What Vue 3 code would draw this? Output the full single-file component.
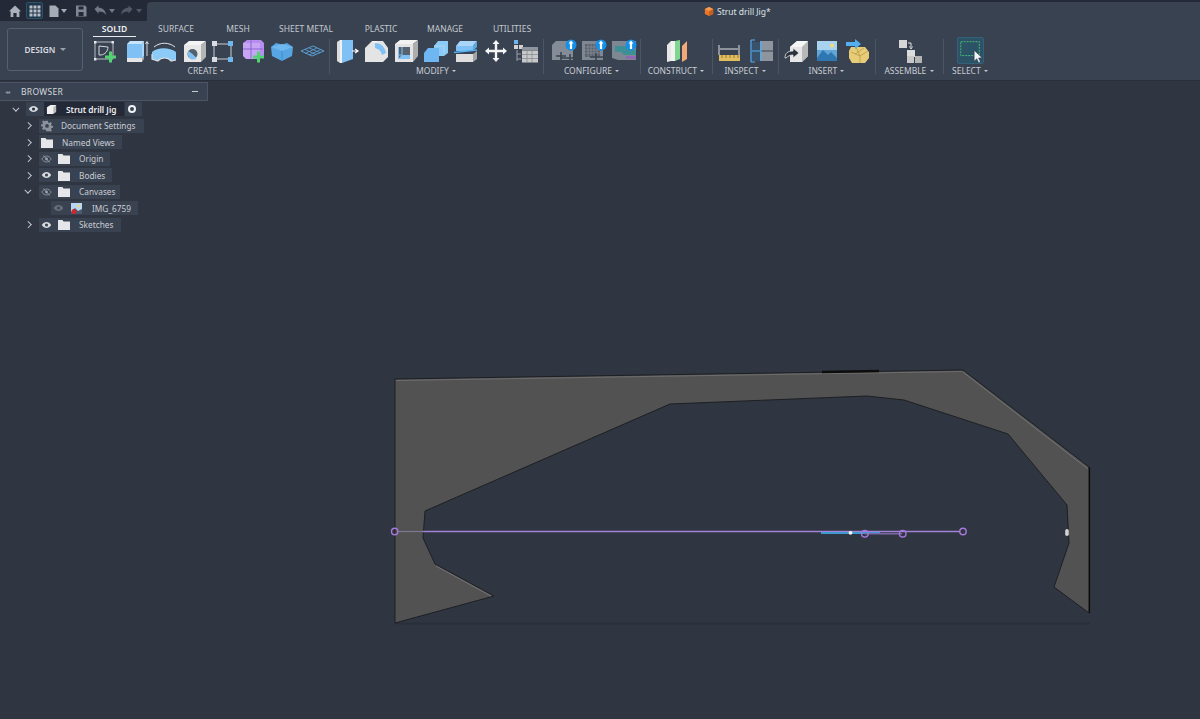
<script setup>
const tabs = [
  { name: 'SOLID', width: 43, active: true },
  { name: 'SURFACE', width: 80 },
  { name: 'MESH', width: 44 },
  { name: 'SHEET METAL', width: 92 },
  { name: 'PLASTIC', width: 58 },
  { name: 'MANAGE', width: 70 },
  { name: 'UTILITIES', width: 64 }
];

const rows = [
  { name: 'Document Settings', chevron: 'right', kind: 'gear', width: 105 },
  { name: 'Named Views', chevron: 'right', kind: 'folder', width: 83 },
  { name: 'Origin', chevron: 'right', kind: 'hidden', width: 71 },
  { name: 'Bodies', chevron: 'right', kind: 'shown', width: 73 },
  { name: 'Canvases', chevron: 'down', kind: 'hidden', width: 81 },
  { name: 'IMG_6759', chevron: '', kind: 'image', width: 87 },
  { name: 'Sketches', chevron: 'right', kind: 'shown', width: 82 }
];
</script>

<template>
  <div class="app">
    <!-- model on the free canvas -->
    <svg class="viewport" viewBox="0 0 1200 719">
      <line x1="395" y1="623.5" x2="1090" y2="623.5" stroke="#292e38" stroke-width="1.5" />
      <polygon
        points="395,379 963,370 1089,467 1089,613 1054,587 1069,543 1067,505 1008,434 904,400 867,396 670,404 425,511 423,538 435,564 494,596 395,623"
        fill="#525252" stroke="#1d1f23" stroke-width="1" />
      <line x1="396" y1="380.5" x2="962" y2="371.5" stroke="#6d6d6d" stroke-width="1" />
      <line x1="963" y1="372" x2="1088" y2="469" stroke="#727272" stroke-width="1" />
      <line x1="436" y1="566" x2="491" y2="596" stroke="#727272" stroke-width="1" />
      <line x1="822" y1="372" x2="879" y2="371" stroke="#0d0d0d" stroke-width="2.4" />
      <line x1="1089.500" y1="467" x2="1089.500" y2="613" stroke="#0b0b0b" stroke-width="1.2" />
      <line x1="398" y1="531.5" x2="423" y2="531.5" stroke="#7f7a92" stroke-width="1.2" />
      <line x1="423" y1="531.5" x2="960" y2="531.5" stroke="#a184d6" stroke-width="1.5" />
      <line x1="821" y1="533" x2="880" y2="533" stroke="#3f9ad2" stroke-width="2" />
      <line x1="865" y1="533.7" x2="902" y2="533.7" stroke="#7f66a8" stroke-width="1.6" />
      <g fill="none" stroke="#a877dc" stroke-width="1.4">
        <circle cx="394.7" cy="531.5" r="3.2" />
        <circle cx="963" cy="531.5" r="3.2" />
        <circle cx="864.8" cy="533.7" r="3.3" />
        <circle cx="902.7" cy="533.7" r="3.3" />
      </g>
      <circle cx="850.5" cy="532.8" r="1.9" fill="#f4f4f4" />
      <rect x="1065.2" y="529" width="3.6" height="7" rx="1.8" fill="#d2d2d2" />
    </svg>

    <header class="titlebar">
      <div class="quick">
        <svg class="qi" viewBox="0 0 14 14"><path d="M7 1.500 13 7.200h-1.600V13H8.600V9H5.400v4H2.600V7.200H1z" fill="#aab0ba" /></svg>
        <span class="grid-btn">
          <svg class="qi" viewBox="0 0 14 14"><path d="M1.500 1.500h3v3h-3zM5.500 1.500h3v3h-3zM9.500 1.500h3v3h-3zM1.500 5.500h3v3h-3zM5.500 5.500h3v3h-3zM9.500 5.500h3v3h-3zM1.500 9.500h3v3h-3zM5.500 9.500h3v3h-3zM9.500 9.500h3v3h-3z" fill="#b9bec7" /></svg>
        </span>
        <svg class="qi file" viewBox="0 0 14 14"><path d="M2.500 1.500h6l3 3v8.500h-9z" fill="#a6acb6" /></svg>
        <i class="caret"></i>
        <svg class="qi save" viewBox="0 0 14 14"><path fill-rule="evenodd" d="M2 1.500h9l1.500 1.500v9.500h-10.500zM4.500 2.500v3h5v-3zM4.500 8v4h5v-4z" fill="#7f8793" /></svg>
        <svg class="qi undo" viewBox="0 0 14 14"><path d="M1.500 5 5.500 1.500v2.300c4 0 7 2.200 7.500 7.200-1.500-2.700-3.500-3.600-7.500-3.600v2.300z" fill="#727985" /></svg>
        <i class="caret dim"></i>
        <svg class="qi redo" viewBox="0 0 14 14"><path d="M12.500 5 8.500 1.500v2.300c-4 0-7 2.200-7.500 7.200 1.500-2.700 3.500-3.600 7.500-3.600v2.300z" fill="#515966" /></svg>
        <i class="caret dimmer"></i>
      </div>
      <div class="doc">
        <svg class="doc-ico" viewBox="0 0 12 12"><path d="M6 .5 11 3v6l-5 2.500L1 9V3z" fill="#e9772b" /><path d="M6 5.500 11 3v6l-5 2.500z" fill="#c95f1c" /><path d="M6 .5 11 3 6 5.500 1 3z" fill="#f59a4e" /></svg>
        <span>Strut drill Jig*</span>
      </div>
    </header>

    <section class="toolbar">
      <button class="design">DESIGN <i class="caret light"></i></button>
      <div class="ribbon">
        <nav class="tabs">
          <span v-for="tab in tabs" :key="tab.name" class="tab" :class="{ active: tab.active }" :style="{ width: tab.width + 'px' }">{{ tab.name }}</span>
        </nav>
        <div class="groups">
          <div class="group create" style="width: 239px">
            <div class="icons tight">
              <svg class="ico" viewBox="0 0 30 26">
                <path d="M5 4h18v17H5z" fill="none" stroke="#c8ccd3" stroke-width=".9" />
                <path d="M4 3h2.400v2.400H4zM21.500 3h2.400v2.400h-2.400zM4 20h2.400v2.400H4z" fill="#e6e8eb" />
                <path d="M9 8v9h2c4-.5 7-4 7-8z" fill="none" stroke="#d5d8dd" />
                <path d="M19 13.500h3v4h4v3h-4v4h-3v-4h-4v-3h4z" fill="#52d273" />
              </svg>
              <svg class="ico" viewBox="0 0 30 26">
                <path d="M7 6 10 3h14l-2 3z" fill="#c8e4fb" />
                <path d="M7 6h15v15H7z" fill="#7fc1f4" />
                <path d="M22 6l2-3v15l-2 3z" fill="#a9d6f8" />
                <path d="M7 20h15v4H7z" fill="#e6e6e6" />
                <path d="M22 20l2-2v3l-2 3z" fill="#a8a8a8" />
                <path d="M27 18V4M25.500 6 27 3.500 28.500 6" fill="none" stroke="#e6e8eb" stroke-width=".9" />
              </svg>
              <svg class="ico" viewBox="0 0 30 26">
                <path d="M5 9c6-5 15-5 21 0" fill="none" stroke="#e4e6ea" />
                <path d="M3 14c6-5 17-5 24 0v8l-5 1c-3-4-10-4-13 0l-6-2z" fill="#8ccbf7" />
                <path d="M3 16v5l6 2c3-4 10-4 13 0l5-1" fill="none" stroke="#e0e0e0" stroke-width="1.200" />
              </svg>
              <svg class="ico" viewBox="0 0 30 26">
                <path d="M5 7h17v17H5z" fill="#e7e7e7" />
                <path d="M5 7l5-4h17l-5 4z" fill="#f4f4f4" />
                <path d="M22 7l5-4v16l-5 5z" fill="#b5b5b5" />
                <circle cx="13.500" cy="16" r="5" fill="#53616f" />
                <path d="M13.500 16l-4-3c-1 2-1 5 1 7s5 2 7 0z" fill="#7fc1f4" />
              </svg>
              <svg class="ico" viewBox="0 0 30 26">
                <path d="M8 6h12M8 21h12M6 8v11M23 8v11" stroke="#c9cdd3" stroke-width="1" />
                <path d="M4 3h5v5H4zM4 19h5v5H4z" fill="#d9dce1" />
                <path d="M20 3h5v5h-5zM20 19h5v5h-5z" fill="#6db7f0" />
              </svg>
              <svg class="ico" viewBox="0 0 30 26">
                <path d="M5 5 9 2h14l3 3v15H8l-3-3z" fill="#b78df0" />
                <path d="M5 5h17v16H8l-3-3z" fill="#c6a5f4" />
                <path d="M13 2.500v18M5 11h20" stroke="#8a5fd0" stroke-width=".9" fill="none" />
                <path d="M19 13.500h3v4h4v3h-4v4h-3v-4h-4v-3h4z" fill="#52d273" />
              </svg>
              <svg class="ico" viewBox="0 0 30 26">
                <path d="M4 9 9 5l6 1.500L20 5l6 4-1 9-10 5-10-5z" fill="#57a5e2" />
                <path d="M4 9 15 13l11-4-11-3z" fill="#6eb7ef" />
                <path d="M15 13v10" stroke="#3b85c4" stroke-width=".8" />
              </svg>
              <svg class="ico" viewBox="0 0 30 26">
                <path d="M4 13 16 8l11 5-12 5z" fill="none" stroke="#5ea6dc" stroke-width=".9" />
                <path d="M8 11.500l11 5M12 9.800l11 5M8 15.500 20 10M12 17 24 11.500" stroke="#5ea6dc" stroke-width=".8" />
              </svg>
            </div>
            <span class="glabel">CREATE <i class="caret small"></i></span>
          </div>
          <div class="group" style="width: 214px">
            <div class="icons">
              <svg class="ico" viewBox="0 0 30 26">
                <path d="M6 4l3-2v23l-3-2z" fill="#dcdcdc" />
                <path d="M11 2h11v19l-11 4z" fill="#7fc1f4" />
                <path d="M9 2h2v23H9z" fill="#f0f0f0" />
                <path d="M21 13h5M24 11l3 2-3 2" fill="none" stroke="#fff" stroke-width="1.200" />
              </svg>
              <svg class="ico" viewBox="0 0 30 26">
                <path d="M4 10 11 3h11l5 7v9l-5 5H4z" fill="#e4e4e4" />
                <path d="M14 5c6 0 10 4 11 10l-4 2c-1-4-3-6-7-7z" fill="#7fc1f4" />
                <path d="M11 3h7l-4 2z" fill="#f4f4f4" />
              </svg>
              <svg class="ico" viewBox="0 0 30 26">
                <path d="M4 6h18v18H4z" fill="#e4e4e4" />
                <path d="M4 6l5-4h18l-5 4z" fill="#f2f2f2" />
                <path d="M22 6l5-4v16l-5 6z" fill="#adadad" />
                <path d="M7 9h12v12H7z" fill="#56636f" />
                <path d="M7 21l4-4h8v4zM7 9h1v12H7z" fill="#7fc1f4" />
                <path d="M11 9v8H7" stroke="#7fc1f4" fill="none" />
              </svg>
              <svg class="ico" viewBox="0 0 30 26">
                <path d="M13 8l4-5h10v12l-4 3H13z" fill="#8ccbf7" />
                <path d="M3 15l4-5h11v14H3z" fill="#6fb7f2" />
                <path d="M13 8h10v7" fill="none" stroke="#a9d6f8" />
              </svg>
              <svg class="ico" viewBox="0 0 30 26">
                <path d="M5 8l4-5h17l-4 5z" fill="#a9d6f8" />
                <path d="M5 8h17v5H5z" fill="#7fc1f4" />
                <path d="M22 8l4-5v6l-4 4z" fill="#5ea6dc" />
                <path d="M3 14.500 26 12" stroke="#55aef0" stroke-width="1.400" />
                <path d="M5 16h17v8H5z" fill="#dedede" />
                <path d="M22 16l4-3v8l-4 3z" fill="#a5a5a5" />
              </svg>
              <svg class="ico" viewBox="0 0 30 26">
                <path d="M15 2l3.500 4H16.200v5.800H22V9.500l4 3.500-4 3.500v-2.300h-5.800V20h2.300L15 24l-3.500-4h2.300v-5.800H8v2.300L4 13l4-3.500v2.300h5.800V6h-2.300z" fill="#f6f6f6" />
              </svg>
              <svg class="ico" viewBox="0 0 30 26">
                <path d="M3 2h4v4H3z" fill="#6db7f0" />
                <path d="M3 7h4v4H3zM8 7h4v4H8z" fill="#d2d2d2" />
                <path d="M6 12v11M6 16h4M6 21h4" stroke="#98a0aa" fill="none" />
                <path d="M11 9h16v3H11z" fill="#8e959f" />
                <path d="M11 12.500h16v12H11z" fill="#c8c8c8" />
                <path d="M11 16.500h16M11 20.500h16M16 12.500v12M21 12.500v12" stroke="#7f8791" stroke-width=".7" />
              </svg>
            </div>
            <span class="glabel">MODIFY <i class="caret small"></i></span>
          </div>
          <div class="group configure" style="width: 97px">
            <div class="icons">
              <svg class="ico" viewBox="0 0 30 26">
                <path d="M3 7l4-4h17v19H3z" fill="#848c97" />
                <path d="M12 14v8M17 18H7M11 20h15M21 16v7" stroke="#39424f" stroke-width="1.500" />
                <circle cx="22" cy="7" r="5.500" fill="#1590e8" />
                <path d="M22 2.500l2.500 3h-1.400V11h-2.200V5.500h-1.400z" fill="#fff" />
              </svg>
              <svg class="ico" viewBox="0 0 30 26">
                <path d="M3 3h21v19H3z" fill="#7f8792" />
                <path d="M6 6h15v13H6z" fill="#59626e" />
                <path d="M9 6v13M12 6v13M15 6v13M18 6v13M6 9h15M6 12h15M6 15h15" stroke="#8c949e" stroke-width=".7" />
                <path d="M17 15v8M11 19h15" stroke="#39424f" stroke-width="1.500" />
                <circle cx="22" cy="7" r="5.500" fill="#1590e8" />
                <path d="M22 2.500l2.500 3h-1.400V11h-2.200V5.500h-1.400z" fill="#fff" />
              </svg>
              <svg class="ico" viewBox="0 0 30 26">
                <path d="M3 3h24v19H9l-6-2z" fill="#7f8792" />
                <path d="M6 8h11l3 4h7v5H15l-3-3H6z" fill="#3f8f96" />
                <path d="M17 18h10v3H17z" fill="#8e68b5" />
                <circle cx="22" cy="7" r="5.500" fill="#1590e8" />
                <path d="M22 2.500l2.500 3h-1.400V11h-2.200V5.500h-1.400z" fill="#fff" />
              </svg>
            </div>
            <span class="glabel">CONFIGURE <i class="caret small"></i></span>
          </div>
          <div class="group" style="width: 72px">
            <div class="icons">
              <svg class="ico" viewBox="0 0 30 26">
                <path d="M6 7l4-4v20l-4 1z" fill="#e6e6e6" />
                <path d="M10 3h4v20h-4z" fill="#f2f2f2" />
                <path d="M14 3l5-1v19l-5 2z" fill="#7ed68f" />
                <path d="M21 8l5-5v18l-5 3z" fill="#f3a878" />
              </svg>
            </div>
            <span class="glabel">CONSTRUCT <i class="caret small"></i></span>
          </div>
          <div class="group" style="width: 66px">
            <div class="icons">
              <svg class="ico" viewBox="0 0 30 26">
                <path d="M4 7v10M24 7v10M5 11h18" stroke="#dfe2e6" fill="none" />
                <path d="M4 17h21v6H4z" fill="#e0bd5f" />
                <path d="M7 17v3M11 17v3M15 17v3M19 17v3M23 17v3" stroke="#8f7430" stroke-width=".9" />
              </svg>
              <svg class="ico" viewBox="0 0 30 26">
                <path d="M15 3h13v20H15z" fill="#8e959f" />
                <path d="M15 12.500h13v1H15z" fill="#39424f" />
                <path d="M7 4h8v19H7z" fill="#39526b" />
                <path d="M7 13h9M16 3v20M6 2v22M6 2h4M6 24h4" stroke="#55aef0" stroke-width="1.200" fill="none" />
              </svg>
            </div>
            <span class="glabel">INSPECT <i class="caret small"></i></span>
          </div>
          <div class="group" style="width: 97px">
            <div class="icons">
              <svg class="ico" viewBox="0 0 30 26">
                <path d="M8 9l7-6h11v15l-6 6H8z" fill="#e6e6e6" />
                <path d="M8 9l7-6h11l-6 6z" fill="#f6f6f6" />
                <path d="M20 9l6-6v15l-6 6z" fill="#b8b8b8" />
                <path d="M3 20c0-5 3-7 8-7v-3l6 5-6 5v-3c-3 0-5 1-7 3z" fill="#2c323c" stroke="#e9e9e9" stroke-width=".8" />
              </svg>
              <svg class="ico" viewBox="0 0 30 26">
                <path d="M5 3h20v20H5z" fill="#5fa5d9" />
                <path d="M5 3h20v9H5z" fill="#a8d2ef" />
                <circle cx="20" cy="7.500" r="2" fill="#f4dc75" />
                <path d="M5 20l6-8 5 5 3-3 6 6v3H5z" fill="#2f77b0" />
              </svg>
              <svg class="ico" viewBox="0 0 30 26">
                <path d="M9 9h14l4 5v6l-4 5H10l-3-5v-7z" fill="#e8cd78" />
                <path d="M9 14l9 4 8-5M14 9l4 9v7M22 10l-9 6" stroke="#b99a45" fill="none" stroke-width=".8" />
                <path d="M4 4h9V1l6 5-6 5V8H4z" fill="#55aef0" />
              </svg>
            </div>
            <span class="glabel">INSERT <i class="caret small"></i></span>
          </div>
          <div class="group" style="width: 68px">
            <div class="icons">
              <svg class="ico" viewBox="0 0 30 26">
                <path d="M5 2h8v8H5z" fill="#d7d7d7" />
                <path d="M14 5h3v4M15.500 8.500 17 11l1.500-2.500" stroke="#e2e2e2" fill="none" />
                <path d="M13 12h8v7h-8z" fill="#dcdcdc" />
                <path d="M13 18h7v7h-7z" fill="#c8c8c8" />
                <path d="M21 18h7v7h-7z" fill="#b4b4b4" />
              </svg>
            </div>
            <span class="glabel">ASSEMBLE <i class="caret small"></i></span>
          </div>
          <div class="group" style="width: 54px">
            <div class="icons">
              <span class="select-btn">
                <svg class="ico-select" viewBox="0 0 27 27">
                  <path d="M3 4h20v15H3z" fill="none" stroke="#4fc774" stroke-width="1" stroke-dasharray="2 1.200" />
                  <path d="M17.500 13.500v11.500l2.800-2.600 2 4.400 1.900-.9-2-4.300 3.800-.3z" fill="#f4f4f4" stroke="#2a3240" stroke-width=".5" />
                </svg>
              </span>
            </div>
            <span class="glabel">SELECT <i class="caret small"></i></span>
          </div>
        </div>
      </div>
    </section>

    <aside class="browser">
      <div class="browser-head">
        <span class="collapse">◂◂</span>
        <span class="browser-title">BROWSER</span>
        <span class="minus"></span>
      </div>
      <div class="tree">
        <div class="row root">
          <span class="chev down"></span>
          <span class="pill eye-cell">
            <svg class="eye" viewBox="0 0 14 10"><path d="M1 5c3-5 9-5 12 0-3 5-9 5-12 0z" fill="#d8dbe0" /><circle cx="7" cy="5" r="2" fill="#2f3540" /></svg>
          </span>
          <span class="pill root-name">
            <svg class="cube" viewBox="0 0 12 12"><path d="M1 3.500 5 1h6v7.500L7.500 11H1z" fill="#f0f0f0" /><path d="M8 3.500 11 1v7.500L8 11z" fill="#b9b9b9" /></svg>
            <b>Strut drill Jig</b>
          </span>
          <span class="pill ring-cell"><i class="ring"></i></span>
        </div>
        <div v-for="row in rows" :key="row.name" class="row" :class="{ nested: row.kind === 'image' }">
          <span class="chev" :class="row.chevron"></span>
          <span class="pill item" :style="{ width: row.width + 'px' }">
            <svg v-if="row.kind === 'gear'" class="slot-ico" viewBox="0 0 14 14">
              <path fill-rule="evenodd" d="M6 1h2l.4 1.800 1.300.6 1.600-1 1.400 1.400-1 1.600.6 1.300 1.700.3v2l-1.700.4-.6 1.300 1 1.600-1.400 1.400-1.600-1-1.300.6L8 13H6l-.4-1.700-1.300-.6-1.600 1-1.400-1.400 1-1.600-.6-1.300L0 7.200v-2l1.700-.3.6-1.300-1-1.600 1.400-1.400 1.600 1 1.300-.6zM7 4.700a2.200 2.200 0 1 0 0 4.400 2.200 2.200 0 0 0 0-4.400z" fill="#8d939d" />
            </svg>
            <template v-else-if="row.kind === 'image'">
              <svg class="eye faint" viewBox="0 0 14 10"><path d="M1 5c3-5 9-5 12 0-3 5-9 5-12 0z" fill="#68707c" /><circle cx="7" cy="5" r="2" fill="#3a4351" /></svg>
              <svg class="thumb" viewBox="0 0 11 11"><path d="M0 0h11v11H0z" fill="#b9d8ef" /><path d="M0 9l4-4 3 3 4-2v5H0z" fill="#4a5a6c" /><circle cx="8" cy="3" r="1.300" fill="#f0d77a" /><circle cx="3" cy="8.500" r="2.500" fill="#c8282e" /></svg>
            </template>
            <template v-else-if="row.kind === 'shown' || row.kind === 'hidden'">
              <svg v-if="row.kind === 'shown'" class="eye" viewBox="0 0 14 10"><path d="M1 5c3-5 9-5 12 0-3 5-9 5-12 0z" fill="#d8dbe0" /><circle cx="7" cy="5" r="2" fill="#3a4351" /></svg>
              <svg v-else class="eye" viewBox="0 0 14 10"><path d="M1 5c3-5 9-5 12 0-3 5-9 5-12 0z" fill="none" stroke="#9aa0aa" /><circle cx="7" cy="5" r="1.800" fill="#9aa0aa" /><path d="M3 .5 11 9.500" stroke="#9aa0aa" /></svg>
            </template>
            <svg v-if="row.kind !== 'gear' && row.kind !== 'image'" class="folder" viewBox="0 0 12 11"><path d="M0 1h4.500l1 1.500H12V11H0z" fill="#e4e6e9" /></svg>
            <span class="item-name" :class="'k-' + row.kind">{{ row.name }}</span>
          </span>
        </div>
      </div>
    </aside>
  </div>
</template>

<style scoped>
.app {
  position: relative;
  width: 1200px;
  height: 719px;
  overflow: hidden;
  background: #2f3541;
  font-family: "Noto Sans", "Open Sans", sans-serif;
  color: #d4d8de;
}

.viewport {
  position: absolute;
  inset: 0;
  width: 1200px;
  height: 719px;
}

.titlebar {
  position: relative;
  display: flex;
  height: 21px;
  background: #232936;
}

.quick {
  display: flex;
  align-items: center;
  width: 147px;
  padding-left: 8px;
  box-sizing: border-box;
}

.qi {
  width: 14px;
  height: 14px;
  flex: none;
}

.grid-btn {
  display: flex;
  align-items: center;
  justify-content: center;
  width: 17px;
  height: 17px;
  margin-left: 4px;
  background: #1f3648;
  border: 1px solid #2e536c;
  border-radius: 2px;
  box-sizing: border-box;
}

.file {
  margin-left: 4px;
}

.caret {
  display: inline-block;
  flex: none;
  width: 0;
  height: 0;
  border-left: 3px solid transparent;
  border-right: 3px solid transparent;
  border-top: 4px solid #a6acb6;
}

.caret.dim {
  margin-left: 2px;
  border-top-color: #727985;
}

.caret.dimmer {
  margin-left: 2px;
  border-top-color: #515966;
}

.caret.light {
  margin-left: 2px;
  vertical-align: 2px;
  border-top: 3px solid #9aa1ac;
}

.caret.small {
  margin-left: 1px;
  vertical-align: 2px;
  border-left-width: 2px;
  border-right-width: 2px;
  border-top: 2px solid #c5c9d0;
}

.save {
  margin-left: 7px;
}

.undo {
  margin-left: 5px;
}

.redo {
  margin-left: 5px;
}

.doc {
  flex: 1;
  display: flex;
  align-items: center;
  gap: 3px;
  margin-top: 2px;
  padding-left: 557px;
  background: #394251;
  border-top-left-radius: 4px;
  font-size: 8.5px;
  color: #dfe2e7;
}

.doc-ico {
  width: 10px;
  height: 11px;
}

.toolbar {
  position: relative;
  display: flex;
  height: 59px;
  background: #394251;
  border-bottom: 1px solid #2a303b;
  box-sizing: content-box;
}

.design {
  width: 76px;
  height: 43px;
  margin: 7px 0 0 7px;
  padding: 0;
  background: transparent;
  border: 1px solid #56606f;
  border-radius: 3px;
  color: #d8dbe0;
  font-family: inherit;
  font-size: 8.3px;
  font-weight: 600;
}

.ribbon {
  margin-left: 7px;
}

.tabs {
  display: flex;
  height: 15px;
  margin-top: 1px;
  padding: 1px 0 0 3px;
}

.tab {
  flex: none;
  height: 13.500px;
  font-size: 8.5px;
  line-height: 12px;
  text-align: center;
  white-space: nowrap;
  color: #c3c8cf;
}

.tab.active {
  color: #eef0f2;
  font-weight: 600;
  border-bottom: 1.500px solid #e8eaed;
  box-sizing: border-box;
}

.groups {
  display: flex;
  margin-top: -1px;
}

.group {
  position: relative;
  flex: none;
  display: flex;
  flex-direction: column;
  align-items: center;
  padding-top: 1px;
  height: 42px;
  box-sizing: border-box;
}

.group + .group::before {
  content: "";
  position: absolute;
  left: 0;
  top: 2px;
  width: 1px;
  height: 35px;
  background: #4b5565;
}

.icons {
  display: flex;
  height: 26px;
}

.tight .ico {
  margin-right: -.5px;
}

.create .icons {
  margin-right: 3px;
}

.create .glabel {
  margin-right: 7px;
}

.configure .icons {
  margin-left: 4px;
}

.ico {
  display: block;
  flex: none;
  width: 30px;
  height: 26px;
}

.select-btn {
  display: block;
  width: 27px;
  height: 27px;
  background: #2c5266;
  border: 1px solid #34607a;
  box-sizing: border-box;
  border-radius: 2px;
  margin-top: -1px;
}

.ico-select {
  display: block;
  width: 25px;
  height: 25px;
}

.glabel {
  margin-top: 1px;
  font-size: 8.5px;
  line-height: 12px;
  white-space: nowrap;
  color: #c9cdd4;
}

.browser {
  position: relative;
  width: 208px;
}

.browser-head {
  display: flex;
  align-items: center;
  height: 19px;
  margin-top: 1px;
  background: #394251;
  border: 1px solid #4b5565;
  border-left: none;
  box-sizing: border-box;
  font-size: 8.5px;
  letter-spacing: .3px;
}

.collapse {
  width: 21px;
  padding-left: 5px;
  box-sizing: border-box;
  font-size: 6px;
  letter-spacing: -1px;
  color: #8a919d;
}

.browser-title {
  flex: 1;
  color: #d4d8de;
}

.minus {
  width: 6px;
  height: 1px;
  margin-right: 9px;
  background: #c5c9d0;
}

.tree {
  font-size: 8.3px;
}

.row {
  display: flex;
  align-items: center;
  height: 16.500px;
  padding-left: 12px;
}

.chev {
  flex: none;
  position: relative;
  width: 27px;
  height: 14px;
}

.chev.right::before,
.chev.down::before {
  content: "";
  position: absolute;
  left: 13.500px;
  top: 4.500px;
  width: 3.500px;
  height: 3.500px;
  border-top: 1px solid #c3c8cf;
  border-right: 1px solid #c3c8cf;
  transform: rotate(45deg);
}

.chev.down::before {
  top: 3.500px;
  transform: rotate(135deg);
}

.root .chev {
  width: 14px;
}

.root .chev.down::before {
  left: 2px;
}

.pill {
  display: flex;
  align-items: center;
  height: 14px;
  background: #394251;
  box-sizing: border-box;
  flex: none;
}

.eye-cell {
  justify-content: center;
  width: 18px;
  padding-right: 3px;
}

.root-name {
  width: 80px;
  background: #232936;
  color: #eceef1;
}

.root-name b {
  margin-left: 9px;
  font-weight: 600;
  white-space: nowrap;
}

.ring-cell {
  justify-content: center;
  width: 17px;
  margin-left: 1px;
  padding-right: 3px;
}

.ring {
  width: 4px;
  height: 4px;
  border: 2px solid #f2f3f5;
  border-radius: 50%;
  box-sizing: content-box;
}

.cube {
  width: 11px;
  height: 11px;
  margin-left: 2px;
}

.eye {
  flex: none;
  width: 11px;
  height: 8px;
}

.item {
  padding-left: 2px;
}

.nested {
  padding-left: 24px;
}

.slot-ico {
  flex: none;
  width: 12px;
  height: 12px;
}

.folder {
  flex: none;
  width: 12px;
  height: 11px;
  margin-left: 6px;
}

.thumb {
  flex: none;
  width: 11px;
  height: 11px;
  margin-left: 7px;
}

.item-name {
  margin-left: 9px;
  white-space: nowrap;
  color: #c9cdd4;
}

.k-gear {
  margin-left: 8px;
}

.k-image {
  margin-left: 10px;
}

.item > .folder:first-child {
  margin-left: 0;
}
</style>
